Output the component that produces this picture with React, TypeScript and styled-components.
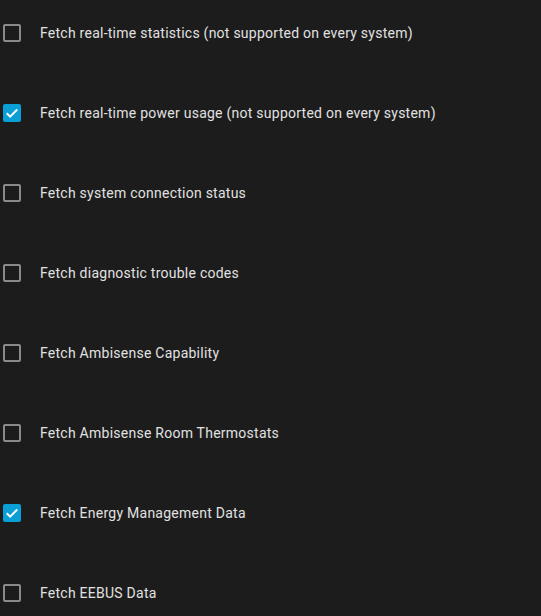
import React from 'react';
import styled, { createGlobalStyle } from 'styled-components';

const GlobalStyle = createGlobalStyle`
    html, body {
        margin: 0;
        padding: 0;
        background: #1c1c1c;
    }
    body {
        font-family: Roboto, "Noto Sans", sans-serif;
    }
`;

const options = [
    { label: 'Fetch real-time statistics (not supported on every system)', checked: false },
    { label: 'Fetch real-time power usage (not supported on every system)', checked: true },
    { label: 'Fetch system connection status', checked: false },
    { label: 'Fetch diagnostic trouble codes', checked: false },
    { label: 'Fetch Ambisense Capability', checked: false },
    { label: 'Fetch Ambisense Room Thermostats', checked: false },
    { label: 'Fetch Energy Management Data', checked: true },
    { label: 'Fetch EEBUS Data', checked: false },
];

const Check = () => (
    <svg width="14" height="14" viewBox="0 0 24 24">
        <path
            d="M3 12.5l5.8 5.8L21 6"
            fill="none"
            stroke="#ffffff"
            strokeWidth="3.4"
        />
    </svg>
);

const App: React.FC = () => {
    const [values, setValues] = React.useState(options.map((o) => o.checked));

    return (
        <>
            <GlobalStyle />
            <List>
                {options.map((option, i) => (
                    <Row
                        key={option.label}
                        onClick={() =>
                            setValues((v) => v.map((x, j) => (j === i ? !x : x)))
                        }
                    >
                        <Box checked={values[i]}>{values[i] && <Check />}</Box>
                        <Label>{option.label}</Label>
                    </Row>
                ))}
            </List>
        </>
    );
};

const List = styled.div`
    display: flex;
    flex-direction: column;
    gap: 40px;
    padding: 13px 0 0 3px;
`;

const Row = styled.div`
    display: flex;
    align-items: center;
    height: 40px;
    gap: 19px;
    cursor: pointer;
`;

const Box = styled.span<{ checked: boolean }>`
    box-sizing: border-box;
    display: flex;
    align-items: center;
    justify-content: center;
    width: 18px;
    height: 18px;
    border-radius: 2px;
    border: 2px solid ${(props) => (props.checked ? '#0a9fd6' : '#8a8a8a')};
    background: ${(props) => (props.checked ? '#0a9fd6' : 'transparent')};
    flex-shrink: 0;
`;

const Label = styled.span`
    font-size: 14px;
    color: #e1e1e1;
    letter-spacing: 0.25px;
`;

export default App;
